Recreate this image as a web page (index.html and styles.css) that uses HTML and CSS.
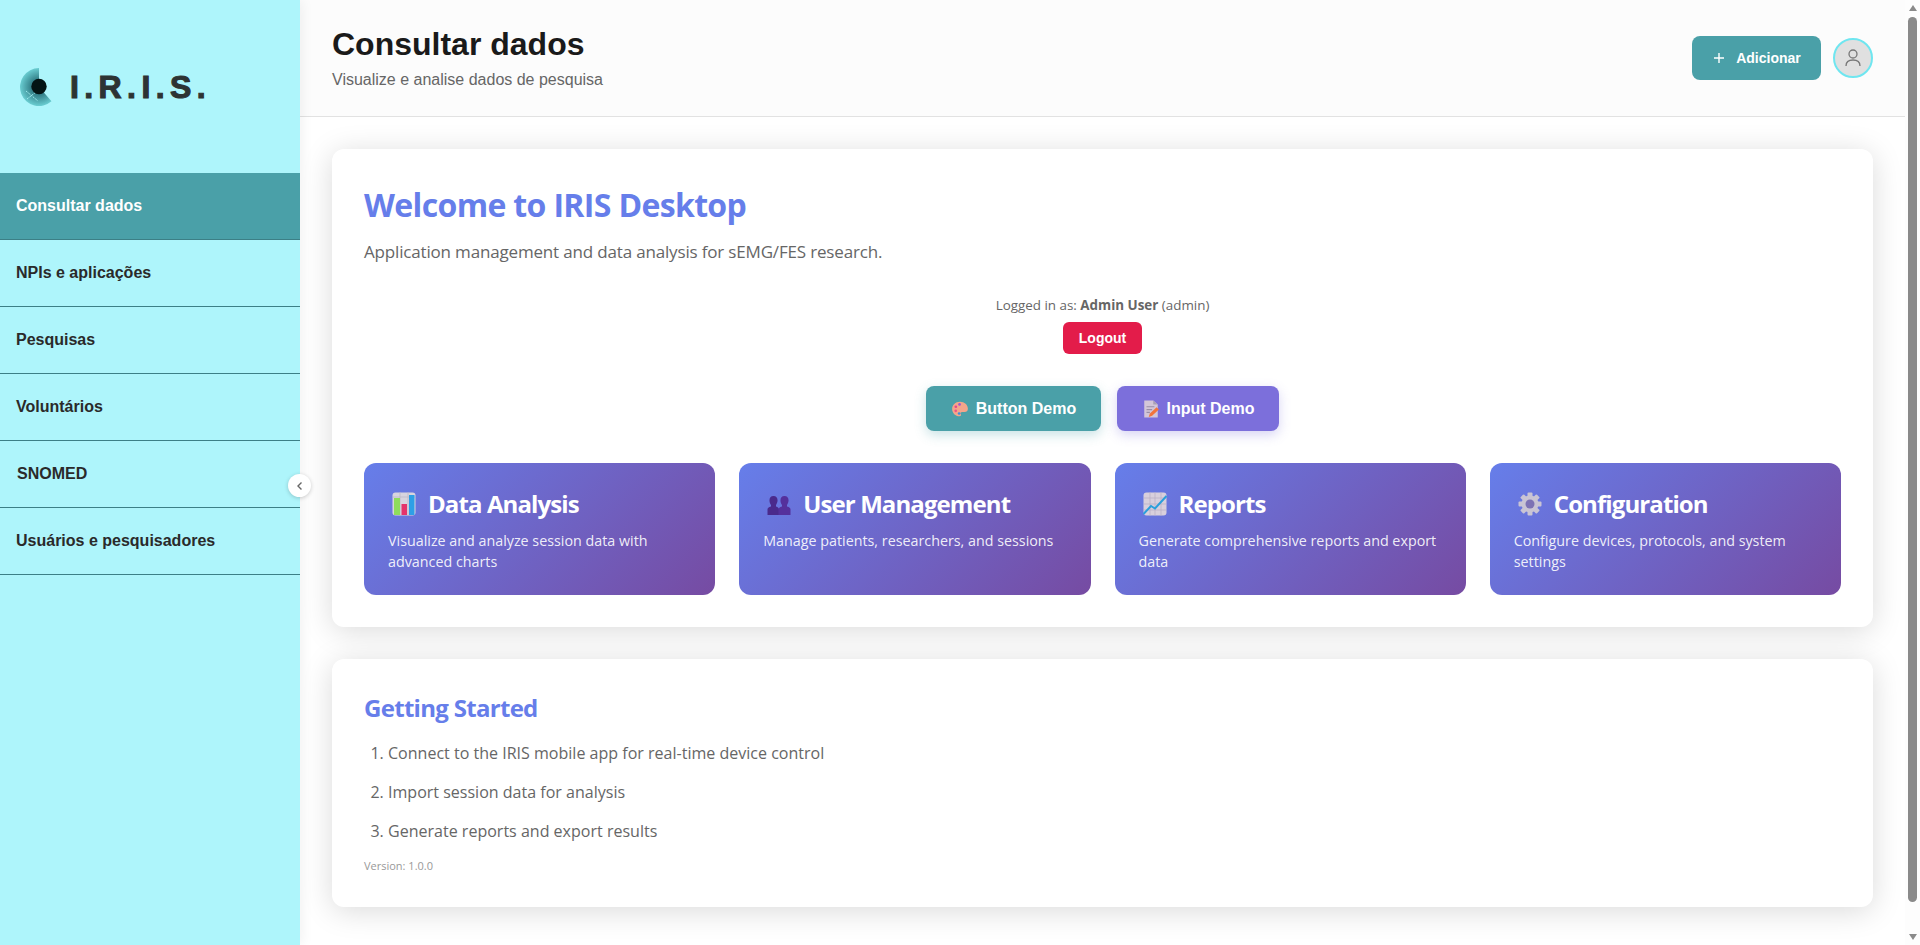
FILE: index.html
```html
<!DOCTYPE html>
<html lang="pt">
<head>
<meta charset="utf-8">
<title>IRIS</title>
<link rel="stylesheet" href="styles.css">
</head>
<body>
<div class="app">
  <aside class="sidebar">
    <div class="logo">
      <svg class="logo-mark" width="42" height="42" viewBox="0 0 42 42">
        <defs><radialGradient id="lg" cx="21" cy="21" r="20" gradientUnits="userSpaceOnUse"><stop offset="0.350" stop-color="#2f7a83"/><stop offset="1" stop-color="#6fd4d8"/></radialGradient></defs>
        <path d="M21 21 L21 2 A19 19 0 1 0 33.500 35.300 Z" fill="url(#lg)"/>
        <path d="M8 25 L20 35 M9 33 L18 26" stroke="#9fecee" stroke-width="1" stroke-dasharray="2 1" fill="none"/>
        <circle cx="21" cy="20.500" r="7.700" fill="#041414"/>
      </svg>
      <span class="logo-text">I.R.I.S.</span>
    </div>
    <nav class="nav">
      <a class="nav-item active">Consultar dados</a>
      <a class="nav-item">NPIs e aplicações</a>
      <a class="nav-item">Pesquisas</a>
      <a class="nav-item">Voluntários</a>
      <a class="nav-item snomed">SNOMED</a>
      <a class="nav-item">Usuários e pesquisadores</a>
    </nav>
    <button class="toggle" aria-label="Recolher">
      <svg width="10" height="10" viewBox="0 0 10 10"><path d="M6.500 1.500 L3 5 L6.500 8.500" fill="none" stroke="#666" stroke-width="1.400"/></svg>
    </button>
  </aside>
  <div class="main">
    <header class="topbar">
      <div class="title-block">
        <h1 class="page-title">Consultar dados</h1>
        <p class="page-sub">Visualize e analise dados de pesquisa</p>
      </div>
      <div class="top-actions">
        <button class="add-btn">
          <svg width="14" height="14" viewBox="0 0 14 14"><path d="M7 2 V12 M2 7 H12" stroke="#fff" stroke-width="1.400"/></svg>
          <span>Adicionar</span>
        </button>
        <div class="avatar">
          <svg width="22" height="22" viewBox="0 0 22 22"><circle cx="11" cy="7" r="4" fill="none" stroke="#777" stroke-width="1.300"/><path d="M4 19 C4 14 7.500 13 11 13 C14.500 13 18 14 18 19" fill="none" stroke="#777" stroke-width="1.300"/></svg>
        </div>
      </div>
    </header>
    <main class="content">
      <section class="card">
        <h2 class="welcome">Welcome to IRIS Desktop</h2>
        <p class="lead">Application management and data analysis for sEMG/FES research.</p>
        <div class="session">
          <p class="logged">Logged in as: <strong>Admin User</strong> (admin)</p>
          <button class="logout">Logout</button>
        </div>
        <div class="demo-row">
          <button class="demo teal">
            <svg class="emo-sm" viewBox="0 0 16 16"><path d="M8 1.500C3.800 1.500 1 4.400 1 8c0 3.600 2.900 6.500 6.500 6.500 1.600 0 1.600-1.200 1.200-2-.5-1 .1-1.800 1.200-1.800h2.200c1.700 0 2.900-1 2.900-2.900C15 4.200 12 1.500 8 1.500z" fill="#f4a58a"/><circle cx="4.300" cy="6" r="1.200" fill="#e8458b"/><circle cx="7.600" cy="3.900" r="1.200" fill="#9b59d0"/><circle cx="4.200" cy="9.600" r="1.200" fill="#f0528a"/><circle cx="7.200" cy="12" r="1.200" fill="#3a8fe0"/></svg>
            <span>Button Demo</span>
          </button>
          <button class="demo violet">
            <svg class="emo-sm" viewBox="0 0 16 16"><path d="M2 0.500H10L14 4V15.500H2Z" fill="#d3c6d8"/><path d="M10 .5 L14 4 H10Z" fill="#a9a0b4"/><path d="M4 6H11M4 8.500H9M4 11H7" stroke="#9a8fa8" stroke-width="1"/><path d="M6 15 L7 12 L13 6.500 L15 8.500 L9 14Z" fill="#f2743c"/></svg>
            <span>Input Demo</span>
          </button>
        </div>
        <div class="features">
          <article class="feature">
            <h3 class="feature-title">
              <svg class="emo" viewBox="0 0 24 24"><rect x="0.500" y="0.500" width="23" height="23" rx="3" fill="#d8d4de"/><path d="M1 5H23M8 0V24M16 0V24" stroke="#bcb6c6" stroke-width=".7"/><rect x="2" y="6" width="6" height="17" fill="#8fdc5c"/><rect x="9.500" y="12" width="5.500" height="11" fill="#e4336b"/><rect x="17" y="3" width="5.500" height="20" fill="#2e9fe6"/></svg>
              Data Analysis
            </h3>
            <p class="feature-text">Visualize and analyze session data with advanced charts</p>
          </article>
          <article class="feature">
            <h3 class="feature-title">
              <svg class="emo" viewBox="0 0 24 24"><g transform="translate(0 3)"><path d="M6.500 1c3 0 4.300 2.200 4 5-.2 1.800-1 3-1.500 4v1.500c2 .8 3 1.500 3 3V20H.5v-5.500c0-1.500 1-2.200 3.500-3V10C3.300 9 2.600 7.800 2.500 6 2.300 3 3.500 1 6.500 1z" fill="#4a2a8c"/><path d="M17.500 1c3 0 4.300 2.200 4 5-.2 1.800-1 3-1.500 4v1.500c2.500.8 3.500 1.500 3.500 3V20h-12v-5.500c0-1.500 1-2.200 3.500-3V10c-.7-1-1.400-2.200-1.500-4-.2-3 1-5 4-5z" fill="#55309c"/></g></svg>
              User Management
            </h3>
            <p class="feature-text">Manage patients, researchers, and sessions</p>
          </article>
          <article class="feature">
            <h3 class="feature-title">
              <svg class="emo" viewBox="0 0 24 24"><rect x="0.500" y="0.500" width="23" height="23" rx="3" fill="#d8cfdc"/><path d="M1 6H23M1 12H23M1 18H23M7 0V24M12 0V24M18 0V24" stroke="#b7adc4" stroke-width=".7"/><path d="M0.500 22 L8 14 L12 16.500 L23.500 4" fill="none" stroke="#2a9fdc" stroke-width="2"/></svg>
              Reports
            </h3>
            <p class="feature-text">Generate comprehensive reports and export data</p>
          </article>
          <article class="feature">
            <h3 class="feature-title">
              <svg class="emo" viewBox="0 0 24 24"><g fill="#c9c4d4"><circle cx="12" cy="12" r="8.500"/><rect x="9.500" y="0.500" width="5" height="23" rx="1"/><rect x="9.500" y="0.500" width="5" height="23" rx="1" transform="rotate(45 12 12)"/><rect x="9.500" y="0.500" width="5" height="23" rx="1" transform="rotate(90 12 12)"/><rect x="9.500" y="0.500" width="5" height="23" rx="1" transform="rotate(135 12 12)"/></g><circle cx="12" cy="12" r="4.500" fill="#7d72b4"/></svg>
              Configuration
            </h3>
            <p class="feature-text">Configure devices, protocols, and system settings</p>
          </article>
        </div>
      </section>
      <section class="card second">
        <h3 class="started">Getting Started</h3>
        <ol class="steps">
          <li>Connect to the IRIS mobile app for real-time device control</li>
          <li>Import session data for analysis</li>
          <li>Generate reports and export results</li>
        </ol>
        <p class="version">Version: 1.0.0</p>
      </section>
    </main>
  </div>
  <div class="scrollbar" aria-hidden="true">
    <span class="arrow up"></span>
    <span class="thumb"></span>
    <span class="arrow down"></span>
  </div>
</div>
</body>
</html>
```
FILE: styles.css
```css
* { box-sizing: border-box; }
html, body { height: 100%; }
body { margin: 0; font-family: "Open Sans", "Noto Sans", sans-serif; background: #fff; color: #333; overflow: hidden; }
p, h1, h2, h3 { margin: 0; }
button { font: inherit; border: 0; cursor: pointer; }
.app { display: flex; height: 945px; overflow: hidden; }
.sidebar { width: 300px; flex: none; background: #aef5fb; position: relative; box-shadow: 2px 0 12px rgba(0,0,0,.06); font-family: "Liberation Sans", Arial, sans-serif; z-index: 2; }
.logo { height: 173px; display: flex; align-items: flex-start; padding: 66px 0 0 18px; }
.logo-mark { flex: none; }
.logo-text { font-size: 32px; font-weight: 700; letter-spacing: 5.400px; color: #2d3333; margin-left: 10px; line-height: 42px; -webkit-text-stroke: 1.100px #2d3333; }
.nav { display: flex; flex-direction: column; }
.nav-item { height: 67px; display: flex; align-items: center; padding: 0 16px; font-size: 16px; font-weight: 700; color: #2a2a2a; border-bottom: 1px solid #3c7f86; }
.nav-item.active { background: #4aa0a8; color: #fff; }
.nav-item.snomed { padding-left: 17px; }
.toggle { position: absolute; top: 474px; right: -11px; width: 23px; height: 23px; border-radius: 50%; background: #fff; box-shadow: 0 1px 4px rgba(0,0,0,.2); padding: 0; display: flex; align-items: center; justify-content: center; }
.main { flex: 1; min-width: 0; }
.topbar { height: 117px; background: #fcfcfc; border-bottom: 1px solid #e2e2e2; display: flex; justify-content: space-between; align-items: center; padding: 0 32px; font-family: "Liberation Sans", Arial, sans-serif; }
.title-block { padding-bottom: 2px; }
.page-title { font-size: 32px; font-weight: 700; color: #1a1a1a; line-height: 38px; margin-bottom: 7px; }
.page-sub { font-size: 16px; color: #666; line-height: 20px; }
.top-actions { display: flex; align-items: center; gap: 12px; }
.add-btn { width: 129px; height: 44px; border-radius: 8px; background: #4aa0a8; color: #fff; font-weight: 700; font-size: 14px; display: flex; align-items: center; justify-content: center; gap: 10px; font-family: "Liberation Sans", Arial, sans-serif; }
.avatar { width: 40px; height: 40px; border-radius: 50%; background: #e0e0e0; border: 2px solid #6fe6f0; display: flex; align-items: center; justify-content: center; }
.content { padding: 32px; }
.card { background: #fff; border-radius: 12px; box-shadow: 0 4px 30px rgba(0,0,0,.15); padding: 32px; }
.second { margin-top: 32px; height: 248px; }
.welcome { font-size: 32px; font-weight: 700; letter-spacing: -.65px; color: #667eea; line-height: 44px; margin-top: 2px; }
.lead { font-size: 17px; letter-spacing: -.17px; color: #666; margin-top: 13px; line-height: 24px; }
.session { text-align: center; margin-top: 32px; }
.logged { font-size: 13.400px; color: #666; line-height: 18px; }
.logout { margin-top: 8px; width: 79px; height: 32px; border-radius: 6px; background: #e31c4a; color: #fff; font-weight: 700; font-size: 14px; font-family: "Liberation Sans", Arial, sans-serif; }
.demo-row { display: flex; justify-content: center; gap: 16px; margin-top: 32px; }
.demo { height: 45px; border-radius: 8px; color: #fff; font-size: 16px; font-weight: 700; display: flex; align-items: center; justify-content: center; gap: 7px; padding-top: 1px; font-family: "Liberation Sans", Arial, sans-serif; }
.teal { width: 175px; background: #4aa0a8; box-shadow: 0 4px 12px rgba(74,160,168,.3); }
.violet { width: 162px; background: #7c6fdb; box-shadow: 0 4px 12px rgba(124,111,219,.3); }
.emo-sm { width: 18px; height: 18px; }
.features { display: grid; grid-template-columns: repeat(4, 1fr); gap: 24px; margin-top: 32px; }
.feature { height: 132px; border-radius: 12px; background: linear-gradient(135deg, #667eea, #764ba2); padding: 25px 24px 0; color: #fff; }
.feature-title { font-size: 24px; font-weight: 700; letter-spacing: -.9px; line-height: 32px; display: flex; align-items: center; gap: 12px; }
.emo { width: 24px; height: 24px; flex: none; margin-left: 4px; }
.feature-text { font-size: 14.300px; line-height: 21px; color: rgba(255,255,255,.9); margin-top: 10px; }
.started { font-size: 24px; font-weight: 700; letter-spacing: -.7px; color: #667eea; line-height: 32px; margin-top: 1px; }
.steps { margin: 17px 0 0; padding: 0 0 0 24px; color: #666; font-size: 16.050px; }
.steps li { line-height: 24px; margin-bottom: 15px; }
.version { font-size: 11px; color: #999; margin-top: 8px; }
.scrollbar { width: 15px; flex: none; background: #fdfdfd; display: flex; flex-direction: column; align-items: center; padding: 5px 0; }
.thumb { width: 9px; height: 885px; margin: 6px 0 32px; background: #8a8a8a; border-radius: 5px; flex: none; }
.arrow { width: 0; height: 0; border-left: 4.500px solid transparent; border-right: 4.500px solid transparent; flex: none; }
.arrow.up { border-bottom: 6px solid #8a8a8a; }
.arrow.down { border-top: 6px solid #8a8a8a; }
```
